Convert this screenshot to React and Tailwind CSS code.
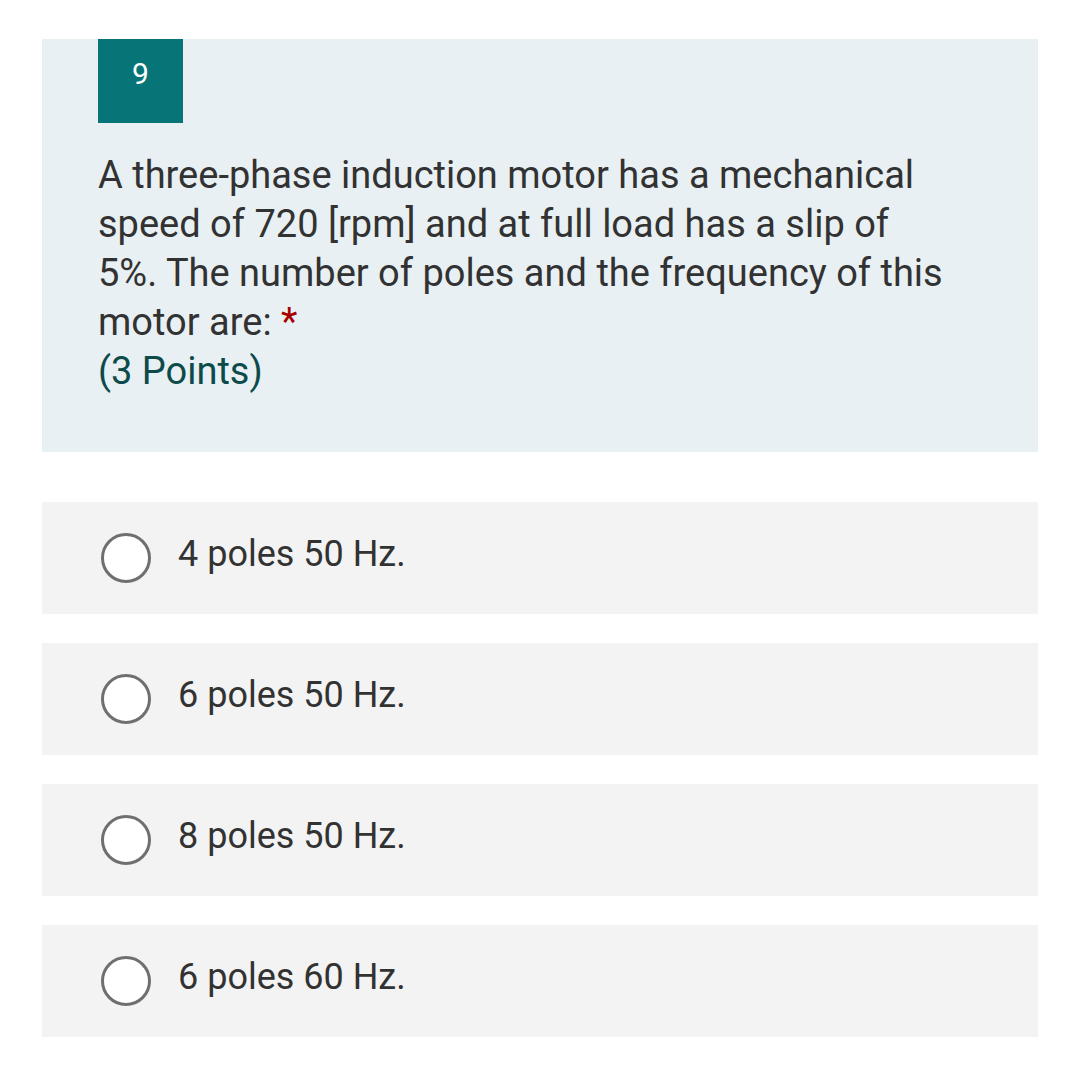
const options = ["4 poles 50 Hz.", "6 poles 50 Hz.", "8 poles 50 Hz.", "6 poles 60 Hz."]

const Option = ({label}) => {
    return(
        <div className="flex items-center h-[112px] bg-[#f3f3f3] pl-[59px]">
            <span className="w-[50px] h-[50px] rounded-full border-[3px] border-[#6f6f6f] bg-white shrink-0"></span>
            <p className="ml-[27px] mb-[9px] text-[36px] text-[#323232] leading-none">{label}</p>
        </div>
    )
}

export default function App() {
    return(
        <div className="w-[1080px] h-[1087px] bg-white pt-[39px] px-[42px]" style={{fontFamily: "Roboto, sans-serif"}}>
            <div className="bg-[#e8f0f3] h-[413px] pl-[56px] pr-[40px]">
                <div className="w-[85px] h-[84px] bg-[#077478] text-white text-[30px] flex justify-center pt-[12px]">9</div>
                <div className="mt-[28px] text-[38px] leading-[49px] text-[#323232] whitespace-nowrap">
                    A three-phase induction motor has a mechanical<br />
                    speed of 720 [rpm] and at full load has a slip of<br />
                    5%. The number of poles and the frequency of this<br />
                    motor are: <span className="text-[#a80000]">*</span>
                </div>
                <div className="text-[38px] leading-[49px] text-[#0d4b4b]">(3 Points)</div>
            </div>
            <div className="mt-[50px] flex flex-col gap-[29px]">
                {options.map((o) => <Option key={o} label={o} />)}
            </div>
        </div>
    )
}
